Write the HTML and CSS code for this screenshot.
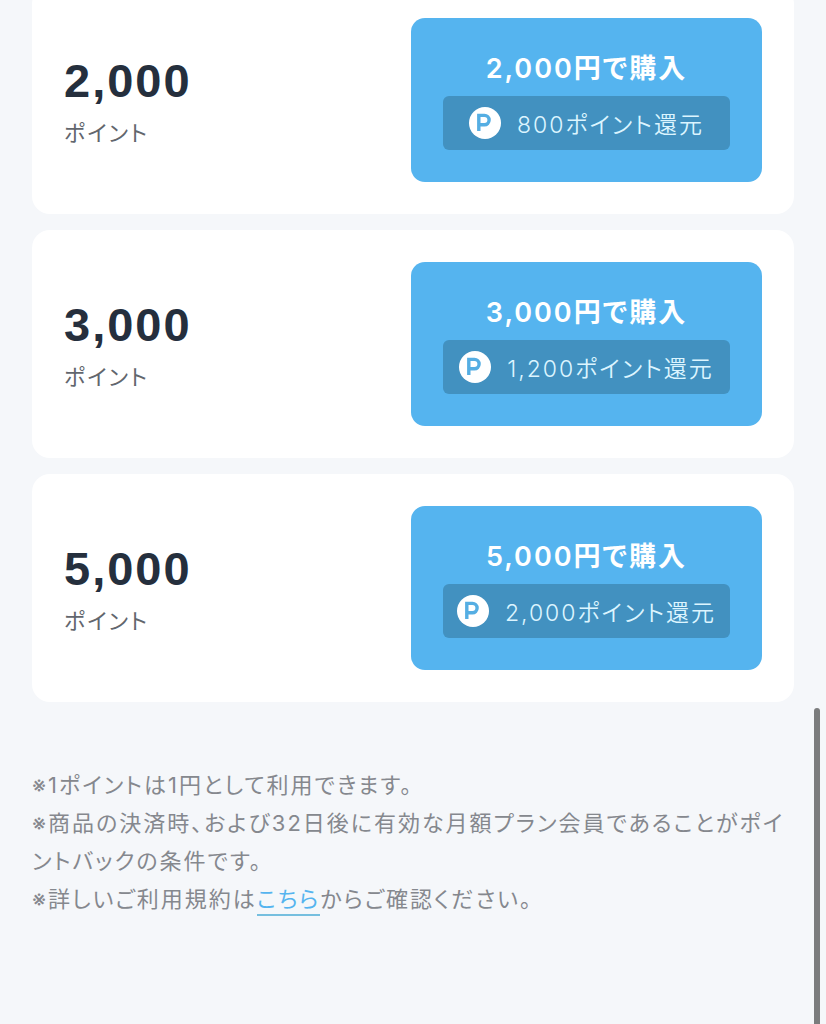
FILE: index.html
```html
<!DOCTYPE html>
<html lang="ja">
<head>
<meta charset="UTF-8">
<meta name="viewport" content="width=device-width, initial-scale=1">
<title>ポイント購入</title>
<link rel="stylesheet" href="styles.css">
</head>
<body>
<main class="page">
  <ul class="plans">
    <li class="plan">
      <div class="amount">
        <p class="number">2,000</p>
        <p class="unit">ポイント</p>
      </div>
      <button type="button" class="buy">
        <span class="price">2,000円で購入</span>
        <span class="reward">
          <svg class="coin" viewBox="0 0 32 32" aria-hidden="true">
            <circle cx="16" cy="16" r="16"/>
            <path d="M9.8 24V8.4H15.4a4.7 4.7 0 0 1 0 9.4H9.8"/>
          </svg>
          800ポイント還元
        </span>
      </button>
    </li>
    <li class="plan">
      <div class="amount">
        <p class="number">3,000</p>
        <p class="unit">ポイント</p>
      </div>
      <button type="button" class="buy">
        <span class="price">3,000円で購入</span>
        <span class="reward">
          <svg class="coin" viewBox="0 0 32 32" aria-hidden="true">
            <circle cx="16" cy="16" r="16"/>
            <path d="M9.8 24V8.4H15.4a4.7 4.7 0 0 1 0 9.4H9.8"/>
          </svg>
          1,200ポイント還元
        </span>
      </button>
    </li>
    <li class="plan">
      <div class="amount">
        <p class="number">5,000</p>
        <p class="unit">ポイント</p>
      </div>
      <button type="button" class="buy">
        <span class="price">5,000円で購入</span>
        <span class="reward">
          <svg class="coin" viewBox="0 0 32 32" aria-hidden="true">
            <circle cx="16" cy="16" r="16"/>
            <path d="M9.8 24V8.4H15.4a4.7 4.7 0 0 1 0 9.4H9.8"/>
          </svg>
          2,000ポイント還元
        </span>
      </button>
    </li>
  </ul>

  <div class="notes">
    <p>※1ポイントは1円として利用できます。</p>
    <p>※商品の決済時、および32日後に有効な月額プラン会員であることがポイントバックの条件です。</p>
    <p>※詳しいご利用規約は<a href="#terms">こちら</a>からご確認ください。</p>
  </div>
</main>
<div class="scroll-thumb"></div>
</body>
</html>
```

FILE: styles.css
```css
* {
  box-sizing: border-box;
  margin: 0;
  padding: 0;
}

body {
  background: #f5f7fa;
  color: #252f3d;
  font-family: Inter, "Noto Sans CJK JP", sans-serif;
  font-feature-settings: "palt";
  letter-spacing: 2px;
}

/* the list is scrolled a little past its top */
.page {
  margin-top: -14px;
  padding: 0 32px;
}

.plans {
  display: flex;
  flex-direction: column;
  gap: 16px;
  list-style: none;
}

.plan {
  display: flex;
  align-items: center;
  justify-content: space-between;
  padding: 32px;
  background: #fff;
  border-radius: 18px;
}

.amount {
  padding-top: 10px;
}

.number {
  font-family: "Liberation Sans", sans-serif;
  font-size: 47px;
  font-weight: bold;
  line-height: 56px;
}

.unit {
  color: #62666d;
  font-size: 22px;
  line-height: 48px;
}

.buy {
  display: flex;
  flex-direction: column;
  gap: 8px;
  min-width: 351px;
  padding: 32px;
  border: none;
  border-radius: 14px;
  background: #55b4ef;
  color: #fff;
  font: inherit;
  font-feature-settings: inherit;
  letter-spacing: inherit;
  cursor: pointer;
}

.price {
  align-self: center;
  font-size: 27px;
  font-weight: 600;
  line-height: 38px;
}

.reward {
  display: flex;
  align-items: center;
  align-self: stretch;
  justify-content: center;
  gap: 16px;
  height: 54px;
  border-radius: 6px;
  background: #4291c0;
  color: #dcf5ff;
  font-size: 23px;
  font-weight: 350;
}

.coin {
  flex: none;
  width: 32px;
  height: 32px;
  fill: #fff;
}

.coin path {
  fill: none;
  stroke: #55aee3;
  stroke-width: 3.4;
}

.notes {
  margin-top: 64px;
  color: #85888e;
  font-size: 22px;
  line-height: 38px;
}

.notes a {
  padding-bottom: 2px;
  border-bottom: 2px solid #76bfdf;
  color: #55b4ef;
  text-decoration: none;
}

.scroll-thumb {
  position: fixed;
  top: 708px;
  right: 6px;
  bottom: -6px;
  width: 6px;
  border-radius: 3px;
  background: #7b7c7d;
}
```
